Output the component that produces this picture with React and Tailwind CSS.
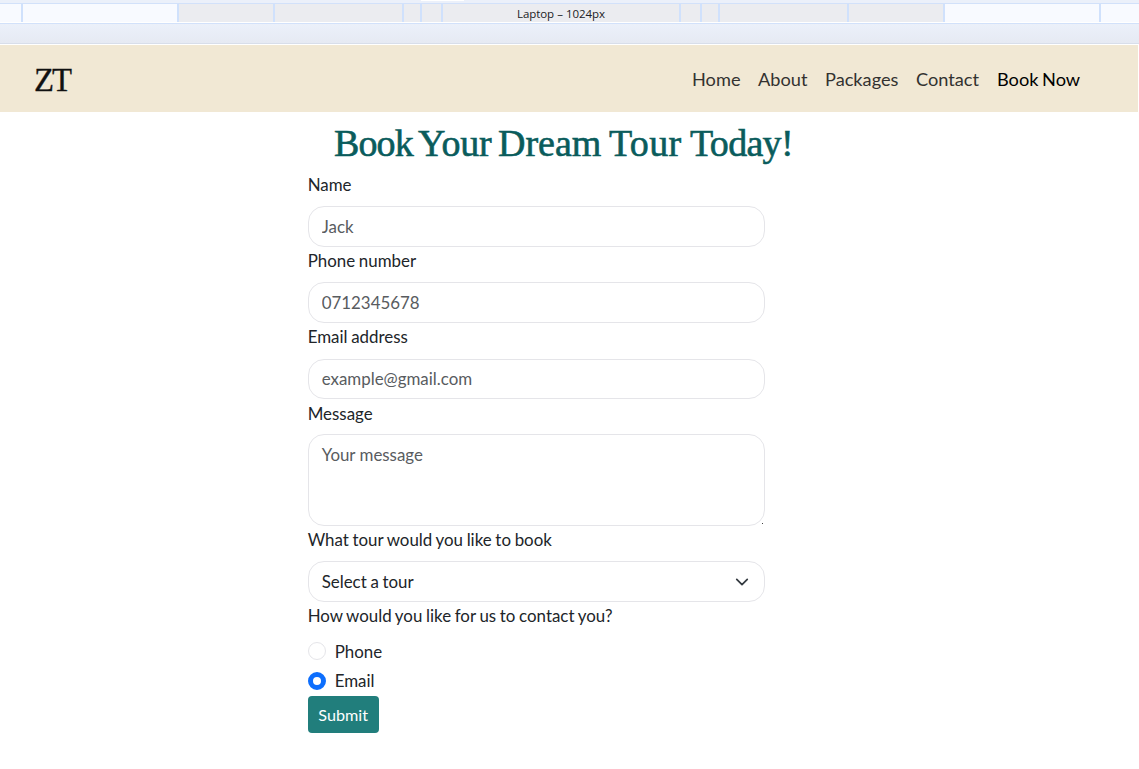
import React from "react";

const segments = [
  ["w-[23px]", "bg-[#f8faff]"],
  ["w-[156px]", "bg-[#f8faff]"],
  ["w-[96px]", "bg-[#ebecf0]"],
  ["w-[129px]", "bg-[#ebecf0]"],
  ["w-[18px]", "bg-[#ebecf0]"],
  ["w-[21px]", "bg-[#ebecf0]"],
  ["w-[238px]", "bg-[#ebecf0]", "Laptop – 1024px"],
  ["w-[21px]", "bg-[#ebecf0]"],
  ["w-[18px]", "bg-[#ebecf0]"],
  ["w-[129px]", "bg-[#ebecf0]"],
  ["w-[96px]", "bg-[#ebecf0]"],
  ["w-[156px]", "bg-[#f8faff]"],
];

const links = [
  ["Home", "w-[66px]"],
  ["About", "w-[67px]"],
  ["Packages", "w-[91px]"],
  ["Contact", "w-[81px]"],
];

const headingWords = [
  ["Book", "w-[84px] tracking-[-0.9px]"],
  ["Your", "w-[80px] tracking-[-0.2px]"],
  ["Dream", "w-[111px] tracking-[0px]"],
  ["Tour", "w-[81px] tracking-[0.3px]"],
  ["Today!", "tracking-[-0.7px]"],
];

function DeviceBar() {
  return (
    <div className="flex h-[45px] flex-col bg-[#ebf0fa]">
      <div className="flex h-[3px] justify-start pl-[421px]">
        <div className="h-px w-[43px] bg-white" />
      </div>
      <div className="flex h-[21px] border-y border-[#d2e1fa]">
        <div className="flex h-[19px] w-full border-b border-white font-['Open_Sans',sans-serif] text-[11.5px] text-[#202124]">
          {segments.map(([width, color, text], i) => (
            <div key={i} className={`flex shrink-0 items-center justify-center border-r-2 border-[#d0e1fc] ${width} ${color}`}>
              {text && <span className="whitespace-nowrap pt-[2px] tracking-[-0.08px] [word-spacing:0.3px]">{text}</span>}
            </div>
          ))}
          <div className="grow bg-[#f8faff]" />
        </div>
      </div>
      <div className="h-[19px] bg-linear-to-b from-[#ebf0fa] to-[#e6eaf3]" />
      <div className="h-px bg-[#d8deea]" />
      <div className="h-px bg-white" />
    </div>
  );
}

function Navbar() {
  return (
    <header className="mr-px flex h-[67px] items-center justify-between bg-[#f1e8d4] pl-[34px]">
      <span className="mt-px origin-left scale-x-[0.95] font-['Liberation_Serif',serif] text-[34.5px] leading-none tracking-[-2px] text-[#111] [-webkit-text-stroke:0.3px_#111]">ZT</span>
      <nav className="flex pt-[2px] text-[18.2px] text-[#333230]">
        {links.map(([text, width]) => (
          <a key={text} className={width}>{text}</a>
        ))}
        <a className="w-[141px] text-black [word-spacing:-1.1px]">Book Now</a>
      </nav>
    </header>
  );
}

function Label({ children, height = "h-[36px]" }) {
  return <div className={`pt-[1px] leading-[25px] ${height}`}>{children}</div>;
}

const control =
  "block w-full rounded-[16px] border border-[#e5e5e9] bg-white px-[13px] outline-none placeholder:text-[#595c5f] placeholder:opacity-100";

function Radio({ checked }) {
  return (
    <input
      type="radio"
      name="contact"
      defaultChecked={checked}
      className="m-0 mb-px h-[18px] w-[18px] appearance-none rounded-full border border-[#e5e5e9] bg-white checked:border-[5px] checked:border-[#0d6efd]"
    />
  );
}

export default function App() {
  return (
    <div className="h-[769px] overflow-hidden bg-white font-[Lato,sans-serif] text-[16.9px] text-[#212529] [word-spacing:-0.65px]">
      <DeviceBar />
      <Navbar />
      <main className="ml-[307px] w-[458.3px]">
        <h1 className="flex h-[59px] whitespace-nowrap pl-[27px] pt-[8px] font-['Liberation_Serif',serif] text-[38px] leading-[46px] text-[#0a5c5c] [-webkit-text-stroke:0.6px_#0a5c5c]">
          {headingWords.map(([word, style]) => (
            <span key={word} className={`shrink-0 ${style}`}>{word} </span>
          ))}
        </h1>
        <form className="pl-[0.7px]">
          <Label height="h-[35px]">Name</Label>
          <input className={`${control} h-[41px]`} placeholder="Jack" />
          <Label height="h-[35px]">Phone number</Label>
          <input className={`${control} h-[41px]`} placeholder="0712345678" />
          <Label>Email address</Label>
          <input className={`${control} h-[40px] pb-[2px]`} placeholder="example@gmail.com" />
          <Label height="h-[35px]"><span className="relative top-px">Message</span></Label>
          <div className="relative">
            <textarea className={`${control} h-[92px] resize-none pt-[7px] leading-[26px]`} placeholder="Your message" />
            <span className="absolute bottom-[2px] right-[2px] h-px w-px bg-[#444]" />
          </div>
          <Label height="h-[35px]">What tour would you like to book</Label>
          <div className={`${control} flex h-[41px] items-center justify-between`}>
            <span>Select a tour</span>
            <svg className="mr-[2px] h-[14px] w-[14px]" viewBox="0 0 16 16" fill="none" stroke="#343a40" strokeWidth="2" strokeLinecap="round" strokeLinejoin="round">
              <path d="m2 5 6 6 6-6" />
            </svg>
          </div>
          <Label height="h-[35px]">How would you like for us to contact you?</Label>
          <label className="flex h-[29px] items-center gap-[9px]">
            <Radio />
            Phone
          </label>
          <label className="flex h-[30px] items-center gap-[9px]">
            <Radio checked />
            Email
          </label>
          <button type="button" className="h-[37px] w-[71px] rounded-[4px] bg-[#217e7c] pt-[2px] text-[16.2px] text-white">
            Submit
          </button>
        </form>
      </main>
    </div>
  );
}
